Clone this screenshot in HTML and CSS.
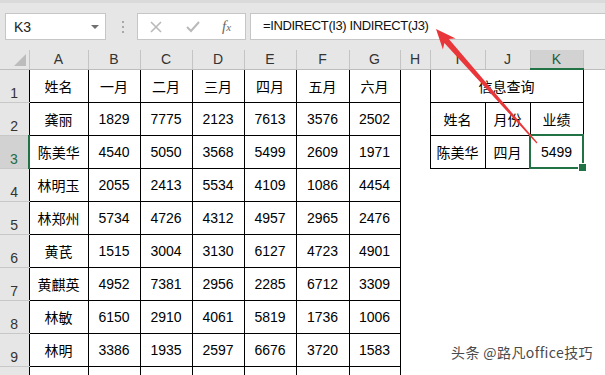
FILE: index.html
```html
<!DOCTYPE html>
<html lang="zh-CN">
    <head>
        <meta charset="UTF-8">
        <title>信息查询</title>
        <link rel="stylesheet" href="styles.css">
    </head>
    <body>
        <main class="sheet">
            <div class="toolbar">
                <div class="name-box">
                    <span>K3</span>
                    <span class="caret"></span>
                </div>
                <div class="grip">
                    <i></i><i></i><i></i>
                </div>
                <div class="func-box">
                    <svg class="icon" width="12" height="12" viewBox="0 0 12 12">
                        <path d="M1 1 L11 11 M11 1 L1 11" stroke="#b9b9b9" stroke-width="1.6" fill="none"/>
                    </svg>
                    <svg class="icon" width="14" height="12" viewBox="0 0 14 12">
                        <path d="M1 6 L5 10 L13 1" stroke="#b9b9b9" stroke-width="2" fill="none"/>
                    </svg>
                    <span class="fx">f<small>x</small></span>
                </div>
                <div class="formula">=INDIRECT(I3) INDIRECT(J3)</div>
            </div>
            <table class="grid">
                <colgroup>
                    <col class="c-head">
                    <col class="c-a">
                    <col class="c-52"><col class="c-52"><col class="c-52"><col class="c-52">
                    <col class="c-53">
                    <col class="c-51">
                    <col class="c-h">
                    <col class="c-i">
                    <col class="c-j">
                    <col class="c-53">
                    <col class="c-rest">
                </colgroup>
                <tr class="heads">
                    <th class="corner"><span class="tri"></span></th>
                    <th>A</th><th>B</th><th>C</th><th>D</th><th>E</th><th>F</th><th>G</th><th>H</th>
                    <th>I</th><th>J</th><th class="active-col">K</th><th></th>
                </tr>
                <tr>
                    <th class="num">1</th>
                    <td class="b">姓名</td><td class="b">一月</td><td class="b">二月</td><td class="b">三月</td><td class="b">四月</td><td class="b">五月</td><td class="b">六月</td>
                    <td></td>
                    <td class="b" colspan="3">信息查询</td>
                    <td></td>
                </tr>
                <tr>
                    <th class="num">2</th>
                    <td class="b">龚丽</td><td class="b">1829</td><td class="b">7775</td><td class="b">2123</td><td class="b">7613</td><td class="b">3576</td><td class="b">2502</td>
                    <td></td>
                    <td class="b">姓名</td><td class="b">月份</td><td class="b">业绩</td>
                    <td></td>
                </tr>
                <tr>
                    <th class="num active-row">3</th>
                    <td class="b">陈美华</td><td class="b">4540</td><td class="b">5050</td><td class="b">3568</td><td class="b">5499</td><td class="b">2609</td><td class="b">1971</td>
                    <td></td>
                    <td class="b">陈美华</td><td class="b">四月</td><td class="b selected">5499</td>
                    <td></td>
                </tr>
                <tr>
                    <th class="num">4</th>
                    <td class="b">林明玉</td><td class="b">2055</td><td class="b">2413</td><td class="b">5534</td><td class="b">4109</td><td class="b">1086</td><td class="b">4454</td>
                    <td></td><td></td><td></td><td></td><td></td>
                </tr>
                <tr>
                    <th class="num">5</th>
                    <td class="b">林郑州</td><td class="b">5734</td><td class="b">4726</td><td class="b">4312</td><td class="b">4957</td><td class="b">2965</td><td class="b">2476</td>
                    <td></td><td></td><td></td><td></td><td></td>
                </tr>
                <tr>
                    <th class="num">6</th>
                    <td class="b">黄芪</td><td class="b">1515</td><td class="b">3004</td><td class="b">3130</td><td class="b">6127</td><td class="b">4723</td><td class="b">4901</td>
                    <td></td><td></td><td></td><td></td><td></td>
                </tr>
                <tr>
                    <th class="num">7</th>
                    <td class="b">黄麒英</td><td class="b">4952</td><td class="b">7381</td><td class="b">2956</td><td class="b">2285</td><td class="b">6712</td><td class="b">3309</td>
                    <td></td><td></td><td></td><td></td><td></td>
                </tr>
                <tr>
                    <th class="num">8</th>
                    <td class="b">林敏</td><td class="b">6150</td><td class="b">2910</td><td class="b">4061</td><td class="b">5819</td><td class="b">1736</td><td class="b">1006</td>
                    <td></td><td></td><td></td><td></td><td></td>
                </tr>
                <tr>
                    <th class="num">9</th>
                    <td class="b">林明</td><td class="b">3386</td><td class="b">1935</td><td class="b">2597</td><td class="b">6676</td><td class="b">3720</td><td class="b">1583</td>
                    <td></td><td></td><td></td><td></td><td></td>
                </tr>
                <tr>
                    <th class="num"></th>
                    <td class="b"></td><td class="b"></td><td class="b"></td><td class="b"></td><td class="b"></td><td class="b"></td><td class="b"></td>
                    <td></td><td></td><td></td><td></td><td></td>
                </tr>
            </table>
            <svg class="arrow" width="605" height="375" viewBox="0 0 605 375">
                <polygon fill="#e9363a" points="436,29 455.7,38.4 448.8,39 537.45,142.6 536.55,143.4 444.4,43 442.9,49.6"/>
            </svg>
            <div class="watermark">头条 @路凡office技巧</div>
        </main>
    </body>
</html>
```

FILE: styles.css
```css
*
{
    margin: 0;
    padding: 0;
    box-sizing: border-box;
}

body
{
    background: #ffffff;
    font-family: "Liberation Sans", "Noto Sans CJK SC", sans-serif;
    color: #000000;
}

.sheet
{
    position: relative;
    overflow: hidden;
    height: 375px;
    width: 605px;
}

/* formula bar */

.toolbar
{
    display: flex;
    align-items: flex-start;
    height: 50px;
    padding: 10px 0 0 5px;

    background: #e6e6e6;
    border-top: 3px solid #dadada;
}

.name-box
{
    display: flex;
    justify-content: space-between;
    align-items: center;
    height: 27px;
    width: 101px;
    padding: 0 6px 0 8px;

    background: #ffffff;
    border: 1px solid #c6c6c6;
    font-size: 14px;
    color: #222222;
}

.caret
{
    border-left: 4px solid transparent;
    border-right: 4px solid transparent;
    border-top: 4px solid #707070;
}

.grip
{
    display: flex;
    flex-direction: column;
    gap: 3px;
    margin: 8px 13px 0 16px;
}

.grip i
{
    height: 2px;
    width: 2px;

    background: #a8a8a8;
}

.func-box
{
    display: flex;
    align-items: center;
    height: 27px;
    width: 109px;
    padding-left: 12px;

    background: #ffffff;
    border: 1px solid #c6c6c6;
}

.icon + .icon
{
    margin-left: 24px;
}

.fx
{
    margin-left: 22px;

    font-family: "Liberation Serif", serif;
    font-style: italic;
    font-size: 15px;
    color: #6a6a6a;
}

.fx small
{
    font-size: 11px;
}

.formula
{
    flex: 1;
    height: 27px;
    margin-left: 4px;
    padding: 4px 0 0 12px;

    background: #ffffff;
    border: 1px solid #c6c6c6;
    border-right: none;
    font-size: 13px;
    letter-spacing: -0.4px;
    color: #111111;
}

/* sheet grid */

.grid
{
    table-layout: fixed;
    border-collapse: collapse;
    width: 605px;
}

.c-head { width: 29px; }
.c-a { width: 59px; }
.c-52 { width: 52px; }
.c-53 { width: 53px; }
.c-51 { width: 51px; }
.c-h { width: 30px; }
.c-i { width: 55px; }
.c-j { width: 45px; }
.c-rest { width: 22px; }

.grid tr
{
    height: 33px;
}

.grid .heads
{
    height: 19px;
}

.heads th
{
    background: #e6e6e6;
    border-right: 1px solid #c4c4c4;
    border-bottom: 1px solid #bdbdbd;
    font-weight: normal;
    font-size: 14px;
    color: #333333;
}

.heads .corner
{
    position: relative;
}

.tri
{
    position: absolute;
    right: 3px;
    bottom: 3px;

    border-left: 12px solid transparent;
    border-bottom: 12px solid #bcbcbc;
}

.heads .active-col
{
    background: #d2d2d2;
    border-bottom: 2px solid #217346;
    color: #1f5c3a;
}

.num
{
    vertical-align: bottom;
    padding-bottom: 1px;

    background: #e6e6e6;
    border-bottom: 1px solid #c8c8c8;
    font-weight: normal;
    font-size: 14px;
    color: #333333;
}

.num.active-row
{
    background: #d2d2d2;
    border-right: 2px solid #217346;
    color: #1f6b45;
}

.grid td
{
    text-align: center;
    vertical-align: middle;
    font-size: 14px;
    white-space: nowrap;
}

.grid td.b
{
    border: 1px solid #000000;
}

.grid td.selected
{
    position: relative;

    outline: 2px solid #217346;
    outline-offset: -1px;
}

.selected::after
{
    content: "";
    position: absolute;
    right: -4px;
    bottom: -4px;
    height: 7px;
    width: 7px;

    background: #217346;
    border: 1px solid #ffffff;
}

/* overlays */

.arrow
{
    position: absolute;
    top: 0;
    left: 0;
    pointer-events: none;
}

.watermark
{
    position: absolute;
    right: 12px;
    bottom: 13px;

    font-family: "Noto Sans CJK SC", sans-serif;
    font-size: 14px;
    letter-spacing: 0.4px;
    color: #4a4a4a;
}
```
